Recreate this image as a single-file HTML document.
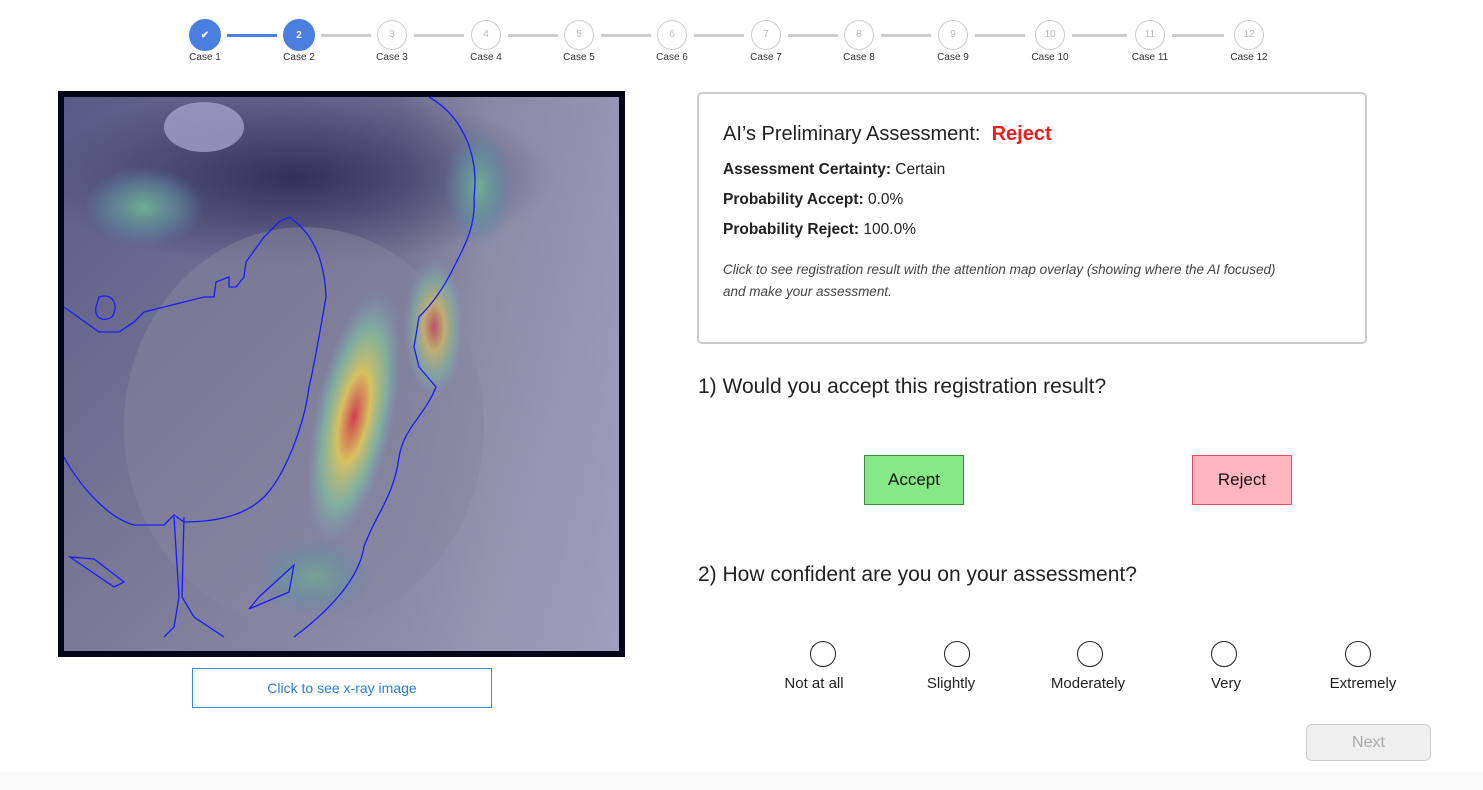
<!DOCTYPE html>
<html><head><meta charset="utf-8"><style>
*{margin:0;padding:0;box-sizing:border-box}
body{width:1483px;height:790px;background:#fff;font-family:"Liberation Sans",Arial,sans-serif;color:#222;position:relative;overflow:hidden}
.a{position:absolute}
.st{position:absolute;width:30px;height:30px;border-radius:50%;border:1.5px solid #ccc;color:#bbb;font-size:10px;text-align:center;line-height:27px;top:20px;background:#fff}
.st.on{background:#4a7fe0;border-color:#4a7fe0;color:#fff;width:32px;height:32px;top:19px;line-height:31px;font-weight:bold}
.ln{position:absolute;top:34px;height:3px;background:#ccc}
.lb{position:absolute;top:52px;font-size:10px;color:#333;width:60px;text-align:center}
.rad{position:absolute;width:26px;height:26px;border:1.5px solid #222;border-radius:50%;top:641px}
.rl{position:absolute;top:675px;font-size:15px;color:#222;width:120px;text-align:center}
</style></head><body>
<div class="ln" style="left:227px;width:50px;background:#4a7fe0"></div>
<div class="ln" style="left:321px;width:50px"></div>
<div class="ln" style="left:414px;width:50px"></div>
<div class="ln" style="left:508px;width:50px"></div>
<div class="ln" style="left:601px;width:50px"></div>
<div class="ln" style="left:694px;width:50px"></div>
<div class="ln" style="left:788px;width:50px"></div>
<div class="ln" style="left:881px;width:50px"></div>
<div class="ln" style="left:975px;width:50px"></div>
<div class="ln" style="left:1072px;width:55px"></div>
<div class="ln" style="left:1172px;width:52px"></div>
<div class="st on" style="left:189px">✔</div>
<div class="st on" style="left:283px">2</div>
<div class="st" style="left:377px">3</div>
<div class="st" style="left:471px">4</div>
<div class="st" style="left:564px">5</div>
<div class="st" style="left:657px">6</div>
<div class="st" style="left:751px">7</div>
<div class="st" style="left:844px">8</div>
<div class="st" style="left:938px">9</div>
<div class="st" style="left:1035px">10</div>
<div class="st" style="left:1135px">11</div>
<div class="st" style="left:1234px">12</div>
<div class="lb" style="left:175px">Case 1</div>
<div class="lb" style="left:269px">Case 2</div>
<div class="lb" style="left:362px">Case 3</div>
<div class="lb" style="left:456px">Case 4</div>
<div class="lb" style="left:549px">Case 5</div>
<div class="lb" style="left:642px">Case 6</div>
<div class="lb" style="left:736px">Case 7</div>
<div class="lb" style="left:829px">Case 8</div>
<div class="lb" style="left:923px">Case 9</div>
<div class="lb" style="left:1020px">Case 10</div>
<div class="lb" style="left:1120px">Case 11</div>
<div class="lb" style="left:1219px">Case 12</div>

<div class="a" style="left:58px;top:91px;width:567px;height:566px;background:#05051a;padding:6px">
<svg width="555" height="554" viewBox="0 0 555 554" style="display:block">
<defs>
<linearGradient id="bg" x1="0" y1="0" x2="1" y2="1"><stop offset="0" stop-color="#5a5a88"/><stop offset=".5" stop-color="#7a7a96"/><stop offset="1" stop-color="#9a9ab8"/></linearGradient>
<linearGradient id="rt" x1="0" y1="0" x2="1" y2="0"><stop offset="0" stop-color="#9898b0" stop-opacity="0"/><stop offset=".4" stop-color="#9898b0" stop-opacity=".6"/><stop offset="1" stop-color="#a0a0c0" stop-opacity=".7"/></linearGradient>
<radialGradient id="hot" cx=".5" cy=".5" r=".5"><stop offset="0" stop-color="#d04050"/><stop offset=".35" stop-color="#d8c060"/><stop offset=".7" stop-color="#80c0a0" stop-opacity=".7"/><stop offset="1" stop-color="#80a0c0" stop-opacity="0"/></radialGradient>
<radialGradient id="grn" cx=".5" cy=".5" r=".5"><stop offset="0" stop-color="#70b090"/><stop offset=".6" stop-color="#6090a0" stop-opacity=".6"/><stop offset="1" stop-color="#6080b0" stop-opacity="0"/></radialGradient>
<radialGradient id="dk" cx=".5" cy=".5" r=".5"><stop offset="0" stop-color="#30305a"/><stop offset="1" stop-color="#30305a" stop-opacity="0"/></radialGradient>
</defs>
<rect width="555" height="554" fill="url(#bg)"/>
<rect x="340" y="0" width="215" height="554" fill="url(#rt)"/>
<ellipse cx="230" cy="80" rx="260" ry="90" fill="url(#dk)"/>
<ellipse cx="240" cy="330" rx="180" ry="200" fill="#8585a0" opacity=".5"/>
<ellipse cx="140" cy="30" rx="40" ry="25" fill="#a0a0c8" opacity=".8"/>
<ellipse cx="80" cy="110" rx="60" ry="40" fill="url(#grn)"/>
<ellipse cx="415" cy="90" rx="35" ry="60" fill="url(#grn)"/>
<ellipse cx="370" cy="230" rx="30" ry="70" fill="url(#hot)" opacity=".7"/>
<ellipse cx="290" cy="320" rx="40" ry="130" fill="url(#hot)" transform="rotate(12 290 320)"/>
<ellipse cx="250" cy="480" rx="60" ry="40" fill="url(#grn)" opacity=".7"/>
<g fill="none" stroke="#1a1aff" stroke-width="1.3">
<path d="M365 0 C400 20 415 60 410 100 C412 130 400 150 390 170 C380 190 370 205 355 220 L350 250 L355 270 L372 290 C360 320 340 330 335 360 C330 400 310 420 300 450 C295 480 270 510 230 540"/>
<path d="M0 210 L35 235 L55 235 L70 225 L80 215 L100 210 L120 205 L140 200 L150 200 L152 185 L165 180 L165 190 L172 190 L180 180 L182 165 L200 140 L215 125 L225 120 C240 130 260 150 262 200 C255 240 250 270 245 290 C240 330 220 380 200 400 C185 415 160 425 120 425 L110 418 L100 428 L70 428 C40 420 10 380 0 360"/>
<path d="M110 420 L115 500 L110 530 L100 540 M120 420 L118 500 L130 520 L160 540"/>
<path d="M35 200 C50 195 55 210 48 220 C40 225 30 222 32 210 Z"/>
<path d="M6 460 L30 462 L60 485 L50 490 Z"/>
<path d="M230 468 L225 495 L185 512 L195 500 Z"/>
</g>
</svg></div>

<div class="a" style="left:192px;top:668px;width:300px;height:40px;border:1px solid #3b8de0;color:#2a7fd8;font-size:14px;text-align:center;line-height:38px">Click to see x-ray image</div>

<div class="a" style="left:697px;top:92px;width:670px;height:252px;border:2px solid #ccc;border-radius:5px;padding:0 24px">
<div style="margin-top:29px;font-size:20px;color:#222">AI’s Preliminary Assessment:&nbsp; <b style="color:#f01c1c">Reject</b></div>
<div style="margin-top:15px;font-size:15.5px"><b>Assessment Certainty:</b> Certain</div>
<div style="margin-top:12px;font-size:15.5px"><b>Probability Accept:</b> 0.0%</div>
<div style="margin-top:12px;font-size:15.5px"><b>Probability Reject:</b> 100.0%</div>
<div style="margin-top:20px;font-size:13.5px;font-style:italic;color:#444;line-height:22px;width:600px">Click to see registration result with the attention map overlay (showing where the AI focused)<br>and make your assessment.</div>
</div>

<div class="a" style="left:698px;top:375px;font-size:21px;color:#222">1) Would you accept this registration result?</div>
<div class="a" style="left:864px;top:455px;width:100px;height:50px;background:#86e886;border:1px solid #3a8a3a;font-size:17px;text-align:center;line-height:48px;color:#111">Accept</div>
<div class="a" style="left:1192px;top:455px;width:100px;height:50px;background:#ffb6c1;border:1px solid #e05060;font-size:17px;text-align:center;line-height:48px;color:#111">Reject</div>
<div class="a" style="left:698px;top:563px;font-size:21px;color:#222">2) How confident are you on your assessment?</div>
<div class="rad" style="left:810px"></div>
<div class="rad" style="left:944px"></div>
<div class="rad" style="left:1077px"></div>
<div class="rad" style="left:1211px"></div>
<div class="rad" style="left:1345px"></div>
<div class="rl" style="left:754px">Not at all</div>
<div class="rl" style="left:891px">Slightly</div>
<div class="rl" style="left:1028px">Moderately</div>
<div class="rl" style="left:1166px">Very</div>
<div class="rl" style="left:1303px">Extremely</div>
<div class="a" style="left:1306px;top:724px;width:125px;height:37px;background:#efefef;border:1px solid #ccc;border-radius:6px;color:#aaa;font-size:16px;text-align:center;line-height:35px">Next</div>
<div class="a" style="left:0;top:772px;width:1483px;height:18px;background:#fafafa"></div>
</body></html>
